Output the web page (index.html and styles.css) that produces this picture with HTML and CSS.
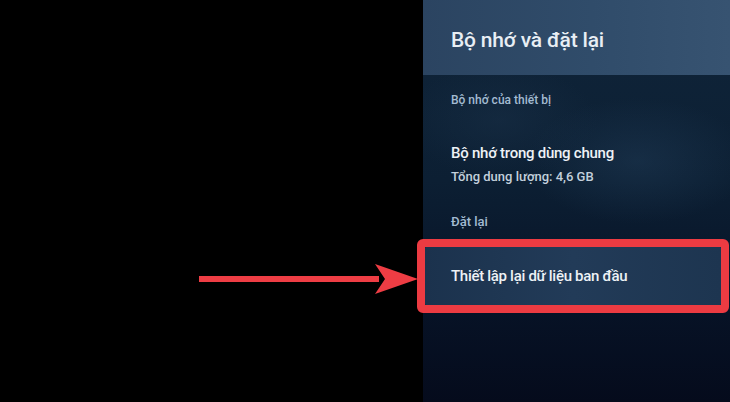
FILE: index.html
```html
<!DOCTYPE html>
<html lang="vi">
<head>
<meta charset="utf-8">
<title>Bộ nhớ và đặt lại</title>
<link rel="stylesheet" href="styles.css">
</head>
<body>
<div class="screen">
  <div class="left">
    <svg class="arrow" width="240" height="50" viewBox="0 0 240 50" aria-hidden="true">
      <rect x="9" y="16" width="180" height="6" fill="#ee3d44"/>
      <polygon points="185,4 228,19 185,34 195,19" fill="#ee3d44"/>
    </svg>
  </div>
  <div class="panel">
    <div class="header">
      <div class="title">Bộ nhớ và đặt lại</div>
    </div>
    <div class="body">
      <div class="label label-first">Bộ nhớ của thiết bị</div>
      <div class="item-title">Bộ nhớ trong dùng chung</div>
      <div class="item-sub">Tổng dung lượng: 4,6 GB</div>
      <div class="label label-second">Đặt lại</div>
      <div class="selected-frame">
        <div class="selected">Thiết lập lại dữ liệu ban đầu</div>
      </div>
    </div>
  </div>
</div>
</body>
</html>
```

FILE: styles.css
```css
html, body {
  margin: 0;
  padding: 0;
  background: #000;
}
body {
  font-family: Roboto, "Noto Sans", "Liberation Sans", sans-serif;
  width: 730px;
  height: 402px;
  overflow: hidden;
}
.screen {
  display: flex;
  width: 730px;
  height: 402px;
}
.left {
  flex: 0 0 423px;
  position: relative;
  background: #000;
}
.arrow {
  position: absolute;
  left: 190px;
  top: 260px;
}
.panel {
  flex: 0 0 307px;
  display: flex;
  flex-direction: column;
  position: relative;
  z-index: 1;
  background:
    radial-gradient(ellipse 160px 90px at 70% 40%, rgba(40,70,100,0.35), rgba(0,0,0,0) 70%),
    radial-gradient(ellipse 140px 80px at 25% 30%, rgba(30,55,80,0.35), rgba(0,0,0,0) 70%),
    linear-gradient(180deg, #10253a 0%, #0c1f33 45%, #071327 75%, #050b1c 100%);
}
.header {
  box-sizing: border-box;
  height: 75px;
  padding: 27px 0 0 28px;
  background: linear-gradient(90deg, #2b4461 0%, #304c6a 55%, #375371 100%);
}
.title {
  font-size: 21px;
  line-height: 26px;
  font-weight: 500;
  color: #e8eef4;
  letter-spacing: -0.2px;
}
.body {
  display: flex;
  flex-direction: column;
  padding-left: 28px;
}
.label {
  color: #a3bbd2;
  line-height: 16px;
  font-weight: 500;
}
.label-first {
  font-size: 12px;
  margin-top: 17px;
}
.item-title {
  font-size: 15px;
  line-height: 20px;
  font-weight: 500;
  color: #eef2f6;
  margin-top: 35px;
  letter-spacing: -0.25px;
}
.item-sub {
  font-size: 13px;
  line-height: 18px;
  font-weight: 500;
  color: #c3d0dc;
  margin-top: 5px;
}
.label-second {
  font-size: 13px;
  margin-top: 28px;
}
.selected-frame {
  margin: 9px 1px 0 -34px;
  border: 8px solid #ec3b42;
  border-radius: 6px;
}
.selected {
  box-sizing: border-box;
  height: 58px;
  padding: 19px 0 0 26px;
  font-size: 15px;
  line-height: 20px;
  font-weight: 500;
  color: #eef2f6;
  letter-spacing: -0.3px;
  border-radius: 1px;
  background: linear-gradient(90deg, #1b324d 0%, #223b58 50%, #1d3550 100%);
}
```
